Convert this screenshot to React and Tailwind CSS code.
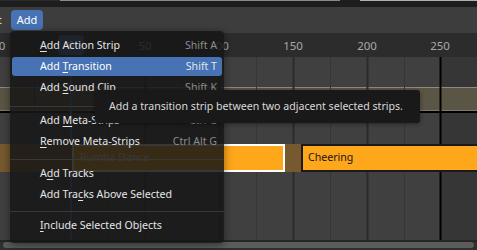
import React from 'react';

const menuItems = [
  { label: 'Add Action Strip', u: 0, shortcut: 'Shift A' },
  { label: 'Add Transition', u: 4, shortcut: 'Shift T', active: true },
  { label: 'Add Sound Clip', u: 4, shortcut: 'Shift K' },
  { sep: 'h-[12px]' },
  { label: 'Add Meta-Strips', u: 4, shortcut: 'Ctrl G' },
  { label: 'Remove Meta-Strips', u: 0, shortcut: 'Ctrl Alt G' },
  { sep: 'h-[11px]' },
  { label: 'Add Tracks', u: 1 },
  { label: 'Add Tracks Above Selected', u: 7 },
  { sep: 'h-[10px]' },
  { label: 'Include Selected Objects', u: 0 },
];

const rulerLabels = [
  { v: '-50', x: -3 },
  { v: '50', x: 145 },
  { v: '100', x: 219 },
  { v: '150', x: 293 },
  { v: '200', x: 367 },
  { v: '250', x: 440 },
];

const darkLines = [-3, 145, 219, 293, 367];
const lightLines = [34, 108, 182, 256, 330, 404];

const MenuLabel = ({ label, u }) => (
  <span>
    {label.slice(0, u)}
    <span className="underline decoration-1 underline-offset-2">{label[u]}</span>
    {label.slice(u + 1)}
  </span>
);

const App = () => {
  return (
    <div
      className="relative w-[477px] h-[250px] overflow-hidden bg-[#1d1d1d] text-[10.6px] select-none"
      style={{ fontFamily: '"Noto Sans", "DejaVu Sans", sans-serif' }}
    >
      {/* window edge above */}
      <div className="flex h-[7px] flex-col">
        <div className="flex h-[1px]">
          <div className="w-[60px] bg-[#2a2a2a]" />
          <div className="w-[280px] bg-[#8e8880]" />
          <div className="w-[20px] bg-[#1d1d1d]" />
          <div className="flex-1 bg-[#b5afa6]" />
        </div>
      </div>

      {/* header */}
      <div className="flex h-[26px] items-center bg-[#3d3d3d] text-[11px] text-[#e6e6e6]">
        <span className="ml-[-18px]">Edit</span>
        <div className="ml-[9px] flex h-[20px] items-center rounded-[4px] bg-[#4772b3] px-[6px] text-white">
          Add
        </div>
      </div>

      {/* ruler */}
      <div className="relative h-[24px] bg-[#2c2c2c] text-[11.5px] text-[#a8a8a8]">
        {rulerLabels.map(l => (
          <span
            key={l.v}
            className="absolute top-[4px] -translate-x-1/2"
            style={{ left: l.x }}
          >
            {l.v}
          </span>
        ))}
        <div className="absolute left-[58px] top-[2px] flex h-[20px] w-[26px] items-center justify-center rounded-[4px] bg-[#4772b3] text-white">
          0
        </div>
      </div>

      {/* tracks */}
      <div className="relative flex h-[183px] flex-col bg-[linear-gradient(to_right,#404040_441px,#363636_441px)]">
        <div className="h-[30px]" />
        <div className="flex h-[26px] flex-col">
          <div className="h-[1px] bg-[#8f8a7e]" />
          <div className="flex-1 bg-[#5b5545]" />
          <div className="h-[1px] bg-[#7d786a]" />
          <div className="h-[2px] bg-black" />
        </div>
        <div className="h-[31px]" />
        <div className="relative z-10 flex h-[28px] bg-[#76592f]">
          <div className="w-[72px]" />
          <div className="flex w-[213px] items-center border-2 border-white bg-[#ffa71a] pl-[6px] text-white">
            Rumba Dance
          </div>
          <div className="w-[16px]" />
          <div className="flex flex-1 items-center border-2 border-r-0 border-[#1a1a1a] bg-[#ffa71a] pl-[5px] text-[#151515]">
            Cheering
          </div>
        </div>
        <div className="flex-1" />

        <svg className="pointer-events-none absolute inset-0" width="477" height="183">
          {lightLines.map(x => (
            <rect key={x} x={x} y="0" width="1" height="183" fill="#363636" />
          ))}
          {darkLines.map(x => (
            <rect key={x} x={x - 0.5} y="0" width="2" height="183" fill="#2b2b2b" />
          ))}
          <rect x="70" y="0" width="2" height="183" fill="#4772b3" />
          <rect x="439.5" y="0" width="2" height="183" fill="#000" />
        </svg>
      </div>

      {/* scrollbar */}
      <div className="flex h-[10px] flex-col bg-[#2f2f2f]">
        <div className="h-[2px] bg-[#262626]" />
        <div className="mx-[3px] h-[6px] rounded-full bg-[#5c5c5c]" />
      </div>

      {/* menu */}
      <div className="absolute left-[10px] top-[31px] z-20 flex h-[212px] w-[214px] flex-col rounded-[4px] bg-[rgba(22,22,22,0.86)] pt-[4px] shadow-[0_2px_8px_rgba(0,0,0,0.45)]">
        {menuItems.map((item, i) =>
          item.sep ? (
            <div key={i} className={`${item.sep} flex flex-col justify-end pb-[3px]`}>
              <div className="h-[1px] bg-[#383838]" />
            </div>
          ) : (
            <div key={i} className="h-[21px] px-[2px] py-[1px]">
              <div
                className={`flex h-full items-center justify-between rounded-[3px] pl-[28px] pr-[5px] ${
                  item.active ? 'bg-[#4772b3] text-white' : 'text-[#e6e6e6]'
                }`}
              >
                <MenuLabel label={item.label} u={item.u} />
                {item.shortcut && (
                  <span className={item.active ? 'text-[#dfe6f2]' : 'text-[#8c8c8c]'}>
                    {item.shortcut}
                  </span>
                )}
              </div>
            </div>
          )
        )}
      </div>

      {/* tooltip */}
      <div className="absolute left-[95px] top-[90px] z-30 flex h-[33px] w-[325px] items-center rounded-[3px] bg-[#191919] pl-[14px] text-[#d9d9d9] shadow-[0_1px_4px_rgba(0,0,0,0.4)]">
        Add a transition strip between two adjacent selected strips.
      </div>
    </div>
  );
};

export default App;
